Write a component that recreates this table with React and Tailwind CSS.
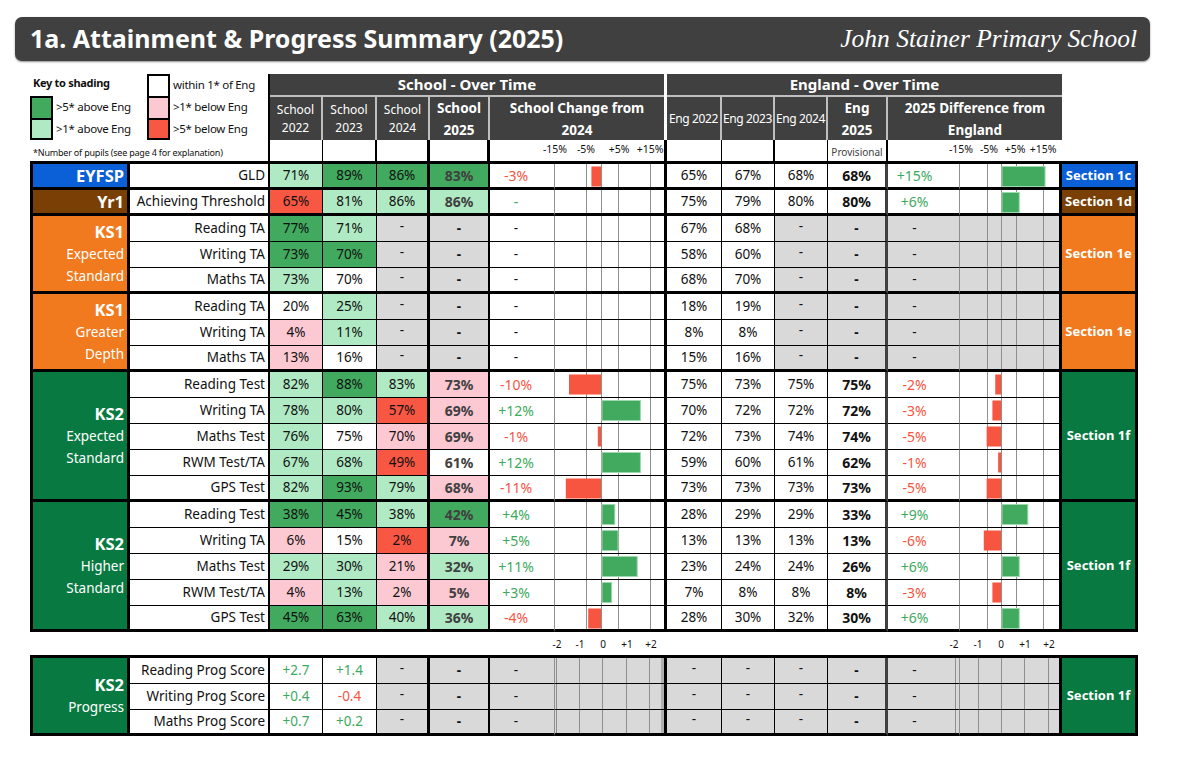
import React from "react";

const DG = "bg-[#42aa5e]";
const LG = "bg-[#b0eac4]";
const PK = "bg-[#fcc9d3]";
const RD = "bg-[#f75743]";
const WH = "bg-white";
const GR = "bg-[#d9d9d9]";
const GRN_T = "text-[#3da95c]";
const RED_T = "text-[#f5553f]";
const BLK_T = "text-[#111111]";

const SCH_LINES = [31, 46, 63, 95];
const ENG_LINES = [27, 41, 56, 83];
const SCH_PROG = [1, 24, 47, 71, 94];
const ENG_PROG = [18, 41, 64, 88];

const tc = (t) => (t.startsWith("+") ? GRN_T : t === "-" ? BLK_T : RED_T);

const groups = [
  {
    bg: "bg-[#0b60d8]",
    title: "EYFSP",
    subs: [],
    sect: "Section 1c",
    rows: [
      { t: "full", l: "GLD", s: [["71%", LG], ["89%", DG], ["86%", DG], ["83%", DG]], c: "-3%", cb: -3, e: ["65%", "67%", "68%", "68%"], d: "+15%", db: 15 },
    ],
  },
  {
    bg: "bg-[#7a3f05]",
    title: "Yr1",
    subs: [],
    sect: "Section 1d",
    rows: [
      { t: "full", l: "Achieving Threshold", s: [["65%", RD], ["81%", LG], ["86%", LG], ["86%", LG]], c: "-", cc: GRN_T, cb: 0, e: ["75%", "79%", "80%", "80%"], d: "+6%", db: 6 },
    ],
  },
  {
    bg: "bg-[#f07a1d]",
    title: "KS1",
    subs: ["Expected", "Standard"],
    sect: "Section 1e",
    rows: [
      { t: "ks1", l: "Reading TA", s: [["77%", DG], ["71%", LG]], e: ["67%", "68%"] },
      { t: "ks1", l: "Writing TA", s: [["73%", DG], ["70%", DG]], e: ["58%", "60%"] },
      { t: "ks1", l: "Maths TA", s: [["73%", LG], ["70%", WH]], e: ["68%", "70%"] },
    ],
  },
  {
    bg: "bg-[#f07a1d]",
    title: "KS1",
    subs: ["Greater", "Depth"],
    sect: "Section 1e",
    rows: [
      { t: "ks1", l: "Reading TA", s: [["20%", WH], ["25%", LG]], e: ["18%", "19%"] },
      { t: "ks1", l: "Writing TA", s: [["4%", PK], ["11%", LG]], e: ["8%", "8%"] },
      { t: "ks1", l: "Maths TA", s: [["13%", PK], ["16%", WH]], e: ["15%", "16%"] },
    ],
  },
  {
    bg: "bg-[#087a41]",
    title: "KS2",
    subs: ["Expected", "Standard"],
    sect: "Section 1f",
    rows: [
      { t: "full", l: "Reading Test", s: [["82%", LG], ["88%", DG], ["83%", LG], ["73%", PK]], c: "-10%", cb: -10, e: ["75%", "73%", "75%", "75%"], d: "-2%", db: -2 },
      { t: "full", l: "Writing TA", s: [["78%", LG], ["80%", LG], ["57%", RD], ["69%", PK]], c: "+12%", cb: 12, e: ["70%", "72%", "72%", "72%"], d: "-3%", db: -3 },
      { t: "full", l: "Maths Test", s: [["76%", LG], ["75%", WH], ["70%", PK], ["69%", PK]], c: "-1%", cb: -1, e: ["72%", "73%", "74%", "74%"], d: "-5%", db: -5 },
      { t: "full", l: "RWM Test/TA", s: [["67%", LG], ["68%", LG], ["49%", RD], ["61%", WH]], c: "+12%", cb: 12, e: ["59%", "60%", "61%", "62%"], d: "-1%", db: -1 },
      { t: "full", l: "GPS Test", s: [["82%", LG], ["93%", DG], ["79%", LG], ["68%", PK]], c: "-11%", cb: -11, e: ["73%", "73%", "73%", "73%"], d: "-5%", db: -5 },
    ],
  },
  {
    bg: "bg-[#087a41]",
    title: "KS2",
    subs: ["Higher", "Standard"],
    sect: "Section 1f",
    rows: [
      { t: "full", l: "Reading Test", s: [["38%", DG], ["45%", DG], ["38%", LG], ["42%", DG]], c: "+4%", cb: 4, e: ["28%", "29%", "29%", "33%"], d: "+9%", db: 9 },
      { t: "full", l: "Writing TA", s: [["6%", PK], ["15%", WH], ["2%", RD], ["7%", PK]], c: "+5%", cb: 5, e: ["13%", "13%", "13%", "13%"], d: "-6%", db: -6 },
      { t: "full", l: "Maths Test", s: [["29%", LG], ["30%", LG], ["21%", PK], ["32%", LG]], c: "+11%", cb: 11, e: ["23%", "24%", "24%", "26%"], d: "+6%", db: 6 },
      { t: "full", l: "RWM Test/TA", s: [["4%", PK], ["13%", LG], ["2%", PK], ["5%", PK]], c: "+3%", cb: 3, e: ["7%", "8%", "8%", "8%"], d: "-3%", db: -3 },
      { t: "full", l: "GPS Test", s: [["45%", DG], ["63%", DG], ["40%", LG], ["36%", LG]], c: "-4%", cb: -4, e: ["28%", "30%", "32%", "30%"], d: "+6%", db: 6 },
    ],
  },
];

const progGroup = {
  bg: "bg-[#087a41]",
  title: "KS2",
  subs: ["Progress"],
  sect: "Section 1f",
  rows: [
    { t: "prog", l: "Reading Prog Score", s: ["+2.7", "+1.4"] },
    { t: "prog", l: "Writing Prog Score", s: ["+0.4", "-0.4"] },
    { t: "prog", l: "Maths Prog Score", s: ["+0.7", "+0.2"] },
  ],
};

function Chart({ lines, bar = 0, zero = 0, scale = 1, extra = null }) {
  return (
    <svg className="absolute inset-0" width="100%" height="100%">
      {lines.map((x) => (
        <rect key={x} x={x} y="0" width="1" height="100%" fill="#8f8f8f" />
      ))}
      {extra}
      {bar !== 0 && (
        <rect
          x={bar < 0 ? zero - Math.abs(bar) * scale : zero + 1}
          y="2.5"
          width={Math.abs(bar) * scale}
          height="20"
          fill={bar < 0 ? "#f7553f" : "#42aa5e"}
          stroke={bar < 0 ? "none" : "#9fd8ae"}
          strokeWidth="1"
        />
      )}
    </svg>
  );
}

function Row({ r, last }) {
  const bb = last ? "border-b-[3px]" : "border-b";
  const cell = `shrink-0 h-full border-black ${bb} flex items-center text-[13.5px]`;
  const label = (
    <div className={`${cell} w-[140px] border-r-2 justify-end pr-[3px] whitespace-nowrap`}>{r.l}</div>
  );

  if (r.t === "full") {
    return (
      <div className="flex h-[26px]">
        {label}
        <div className={`${cell} w-[53px] border-r justify-center ${r.s[0][1]}`}>{r.s[0][0]}</div>
        <div className={`${cell} w-[54px] border-r justify-center ${r.s[1][1]}`}>{r.s[1][0]}</div>
        <div className={`${cell} w-[53px] border-r-[3px] justify-center ${r.s[2][1]}`}>{r.s[2][0]}</div>
        <div className={`${cell} w-[60px] border-r-2 justify-center font-bold text-[#404040] text-[14px] ${r.s[3][1]}`}>{r.s[3][0]}</div>
        <div className={`${cell} w-[65px] border-r border-r-[#8f8f8f] justify-center pr-[12px] text-[14px] ${r.cc || tc(r.c)}`}>{r.c}</div>
        <div className={`${cell} w-[112px] border-r-[3px] relative`}>
          <Chart lines={SCH_LINES} bar={r.cb} zero={46} scale={3.2} />
        </div>
        <div className={`${cell} w-[55px] border-r justify-center`}>{r.e[0]}</div>
        <div className={`${cell} w-[53px] border-r justify-center`}>{r.e[1]}</div>
        <div className={`${cell} w-[53px] border-r justify-center`}>{r.e[2]}</div>
        <div className={`${cell} w-[60px] border-r-[3px] border-r-[#404040] justify-center font-bold text-[14px]`}>{r.e[3]}</div>
        <div className={`${cell} w-[72px] border-r border-r-[#8f8f8f] justify-center pr-[18px] text-[14px] ${tc(r.d)}`}>{r.d}</div>
        <div className={`${cell} w-[102px] border-r-[3px] relative`}>
          <Chart lines={ENG_LINES} bar={r.db} zero={41} scale={2.87} />
        </div>
      </div>
    );
  }

  if (r.t === "ks1") {
    return (
      <div className="flex h-[26px]">
        {label}
        <div className={`${cell} w-[53px] border-r justify-center ${r.s[0][1]}`}>{r.s[0][0]}</div>
        <div className={`${cell} w-[54px] border-r justify-center ${r.s[1][1]}`}>{r.s[1][0]}</div>
        <div className={`${cell} w-[53px] border-r-[3px] justify-center ${GR}`}>
          <span className="-mt-[4px]">-</span>
        </div>
        <div className={`${cell} w-[60px] border-r-2 justify-center font-bold ${GR}`}>-</div>
        <div className={`${cell} w-[65px] border-r border-r-[#8f8f8f] justify-center pr-[12px]`}>-</div>
        <div className={`${cell} w-[112px] border-r-[3px] relative`}>
          <Chart lines={SCH_LINES} />
        </div>
        <div className={`${cell} w-[55px] border-r justify-center`}>{r.e[0]}</div>
        <div className={`${cell} w-[53px] border-r justify-center`}>{r.e[1]}</div>
        <div className={`${cell} w-[53px] border-r justify-center ${GR}`}>
          <span className="-mt-[4px]">-</span>
        </div>
        <div className={`${cell} w-[60px] border-r-[3px] border-r-[#404040] justify-center font-bold ${GR}`}>-</div>
        <div className={`${cell} w-[72px] border-r border-r-[#8f8f8f] justify-center pr-[18px] ${GR}`}>-</div>
        <div className={`${cell} w-[102px] border-r-[3px] relative ${GR}`}>
          <Chart lines={ENG_LINES} />
        </div>
      </div>
    );
  }

  return (
    <div className="flex h-[26px]">
      {label}
      <div className={`${cell} w-[53px] border-r justify-center ${tc(r.s[0])}`}>{r.s[0]}</div>
      <div className={`${cell} w-[54px] border-r justify-center ${tc(r.s[1])}`}>{r.s[1]}</div>
      <div className={`${cell} w-[53px] border-r-[3px] justify-center ${GR}`}>
        <span className="-mt-[4px]">-</span>
      </div>
      <div className={`${cell} w-[60px] border-r-2 justify-center font-bold ${GR}`}>-</div>
      <div className={`${cell} w-[65px] border-r border-r-[#8f8f8f] justify-center pr-[12px] ${GR}`}>-</div>
      <div className={`${cell} w-[112px] border-r-[3px] relative ${GR}`}>
        <Chart lines={SCH_PROG} extra={<rect x="106" y="0" width="3" height="100%" fill="#b0b0b0" />} />
      </div>
      <div className={`${cell} w-[55px] border-r justify-center ${GR}`}>
        <span className="-mt-[4px]">-</span>
      </div>
      <div className={`${cell} w-[53px] border-r justify-center ${GR}`}>
        <span className="-mt-[4px]">-</span>
      </div>
      <div className={`${cell} w-[53px] border-r justify-center ${GR}`}>
        <span className="-mt-[4px]">-</span>
      </div>
      <div className={`${cell} w-[60px] border-r-[3px] border-r-[#404040] justify-center font-bold ${GR}`}>-</div>
      <div className={`${cell} w-[72px] border-r border-r-[#8f8f8f] justify-center pr-[18px] relative ${GR}`}>
        <Chart lines={[67]} />
        <span className="relative">-</span>
      </div>
      <div className={`${cell} w-[102px] border-r-[3px] relative ${GR}`}>
        <Chart lines={ENG_PROG} />
      </div>
    </div>
  );
}

function Group({ g }) {
  return (
    <div className="flex">
      <div className={`w-[100px] shrink-0 border-l-[3px] border-r-[3px] border-b-[3px] border-black ${g.bg} text-white flex flex-col items-end justify-center pr-[3px]`}>
        <div className="font-bold text-[16.5px] leading-[22px]">{g.title}</div>
        {g.subs.map((s) => (
          <div key={s} className="text-[13.5px] leading-[22px]">{s}</div>
        ))}
      </div>
      <div className="flex flex-col">
        {g.rows.map((r, i) => (
          <Row key={i} r={r} last={i === g.rows.length - 1} />
        ))}
      </div>
      <div className={`w-[76px] shrink-0 border-r-[3px] border-b-[3px] border-black ${g.bg} text-white font-bold text-[13px] flex items-center justify-center`}>
        {g.sect}
      </div>
    </div>
  );
}

function KeyBox({ color, top = true, bottom = false }) {
  return (
    <div
      className={`w-[23px] h-full shrink-0 border-black border-x-2 ${top ? "border-t-2" : ""} ${bottom ? "border-b-2" : ""} ${color}`}
    />
  );
}

function KeyArea() {
  return (
    <div className="w-[238px] shrink-0 h-[87px] flex flex-col text-[11.5px] tracking-[-0.3px] text-[#111]">
      <div className="flex h-[22px]">
        <div className="w-[117px] pl-[3px] pt-[1px] font-bold text-[11px]">Key to shading</div>
        <KeyBox color={WH} />
        <div className="pl-[3px] self-center">within 1* of Eng</div>
      </div>
      <div className="flex h-[22px] items-center">
        <KeyBox color={DG} />
        <div className="w-[94px] pl-[3px]">&gt;5* above Eng</div>
        <KeyBox color={PK} />
        <div className="pl-[3px]">&gt;1* below Eng</div>
      </div>
      <div className="flex h-[22px] items-center">
        <KeyBox color={LG} bottom />
        <div className="w-[94px] pl-[3px]">&gt;1* above Eng</div>
        <KeyBox color={RD} bottom />
        <div className="pl-[3px]">&gt;5* below Eng</div>
      </div>
      <div className="pl-[3px] pt-[6px] text-[9px] tracking-[-0.2px]">*Number of pupils (see page 4 for explanation)</div>
    </div>
  );
}

function AxisSvg({ w, labels, y = 13, size = 10.5 }) {
  return (
    <svg width={w} height="100%" className="absolute inset-0 overflow-visible">
      {labels.map(([x, t]) => (
        <text key={t} x={x} y={y} textAnchor="middle" fontSize={size} fill="#111" fontFamily="Noto Sans, sans-serif">
          {t}
        </text>
      ))}
    </svg>
  );
}

function Header() {
  const sub = "h-full flex flex-col items-center justify-center bg-[#404040] text-white border-r-2 border-[#bfbfbf]";
  return (
    <div className="flex">
      <KeyArea />
      {/* School block */}
      <div className="w-[399px] shrink-0 border-l-2 border-black flex flex-col">
        <div className="h-[21px] bg-[#404040] border-r-[3px] border-white text-white font-bold text-[15px] flex items-center justify-center">
          School - Over Time
        </div>
        <div className="h-[2px] bg-[#bfbfbf] mr-[3px]" />
        <div className="h-[43px] flex text-[12px] leading-[18px]">
          <div className={`${sub} w-[53px]`}><span>School</span><span>2022</span></div>
          <div className={`${sub} w-[54px]`}><span>School</span><span>2023</span></div>
          <div className={`${sub} w-[53px]`}><span>School</span><span>2024</span></div>
          <div className={`${sub} w-[60px] font-bold text-[13.5px] leading-[22px]`}><span>School</span><span>2025</span></div>
          <div className="w-[177px] h-full flex flex-col items-center justify-center bg-[#404040] text-white border-r-[3px] border-white font-bold text-[13.5px] leading-[22px]">
            <span>School Change from</span>
            <span>2024</span>
          </div>
        </div>
        <div className="h-[21px] flex">
          <div className="w-[53px] h-full border-r border-black" />
          <div className="w-[54px] h-full border-r-2 border-black" />
          <div className="w-[53px] h-full border-r-[3px] border-black" />
          <div className="w-[60px] h-full border-r-[3px] border-black" />
          <div className="w-[177px] h-full border-r-[3px] border-black relative">
            <AxisSvg w={174} labels={[[65, "-15%"], [96, "-5%"], [129, "+5%"], [160, "+15%"]]} />
          </div>
        </div>
      </div>
      {/* England block */}
      <div className="w-[395px] shrink-0 flex flex-col">
        <div className="h-[21px] bg-[#404040] text-white font-bold text-[15px] flex items-center justify-center">
          England - Over Time
        </div>
        <div className="h-[2px] bg-[#bfbfbf]" />
        <div className="h-[43px] flex text-[12px] leading-[18px] tracking-[-0.4px] whitespace-nowrap">
          <div className={`${sub} w-[55px]`}>Eng 2022</div>
          <div className={`${sub} w-[53px]`}>Eng 2023</div>
          <div className={`${sub} w-[53px]`}>Eng 2024</div>
          <div className={`${sub} w-[60px] font-bold text-[13.5px] leading-[22px] tracking-normal`}><span>Eng</span><span>2025</span></div>
          <div className="w-[174px] h-full flex flex-col items-center justify-center bg-[#404040] text-white font-bold text-[13.5px] leading-[22px] tracking-normal">
            <span>2025 Difference from</span>
            <span>England</span>
          </div>
        </div>
        <div className="h-[21px] flex">
          <div className="w-[55px] h-full border-r border-black" />
          <div className="w-[53px] h-full border-r-2 border-black" />
          <div className="w-[53px] h-full border-r border-black" />
          <div className="w-[60px] h-full border-r-2 border-black flex items-end justify-center text-[10px] text-[#404040] pb-[1px]">
            Provisional
          </div>
          <div className="w-[174px] h-full relative">
            <AxisSvg w={174} labels={[[73, "-15%"], [101, "-5%"], [127, "+5%"], [155, "+15%"]]} />
          </div>
        </div>
      </div>
    </div>
  );
}

export default function App() {
  return (
    <div className="w-[1183px] h-[773px] bg-white overflow-hidden font-['Noto_Sans',sans-serif] text-[#111111]">
      <div className="pt-[17px] pl-[15px]">
        <div className="w-[1135px] h-[44px] rounded-[7px] bg-[#404040] flex items-center justify-between pl-[15px] pr-[13px] shadow-[0_1px_2px_rgba(0,0,0,0.45)]">
          <span className="text-white font-bold text-[25px]">1a. Attainment &amp; Progress Summary (2025)</span>
          <span className="text-white italic text-[25.5px] font-['Liberation_Serif',serif]">John Stainer Primary School</span>
        </div>
      </div>
      <div className="ml-[30px] mt-[13px] w-[1108px]">
        <Header />
        <div className="border-t-[3px] border-black">
          {groups.map((g, i) => (
            <Group key={i} g={g} />
          ))}
        </div>
        <div className="h-[23px] relative">
          <AxisSvg
            w={1108}
            y={16}
            size={10}
            labels={[
              [527, "-2"], [550, "-1"], [573, "0"], [597, "+1"], [621, "+2"],
              [924, "-2 "], [948, "-1 "], [971, "0 "], [995, "+1 "], [1019, "+2 "],
            ]}
          />
        </div>
        <div className="border-t-[3px] border-black">
          <Group g={progGroup} />
        </div>
      </div>
    </div>
  );
}
